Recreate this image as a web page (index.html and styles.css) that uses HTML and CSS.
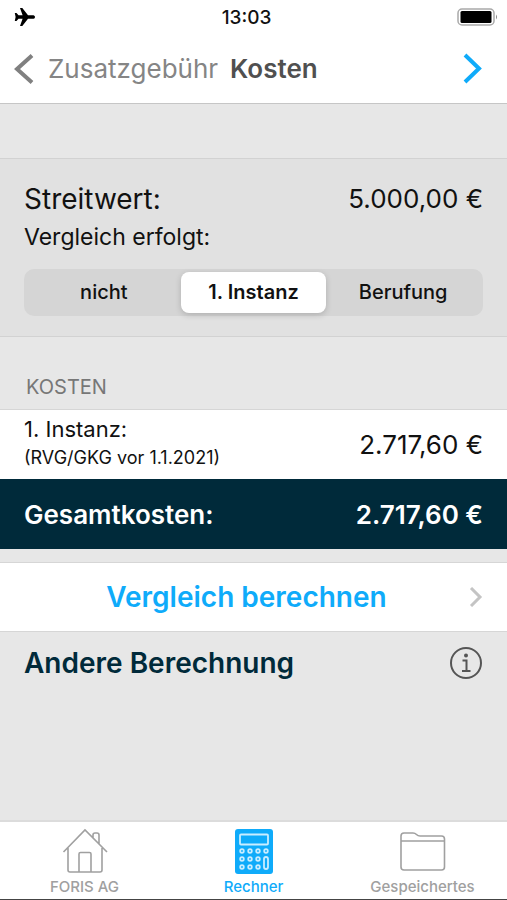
FILE: index.html
```
<!DOCTYPE html>
<html lang="de">
<head>
	<meta charset="utf-8">
	<meta name="viewport" content="width=device-width, initial-scale=1">
	<title>Kosten</title>
	<link rel="stylesheet" href="styles.css">
</head>
<body>

<header class="top">
	<div class="status">
		<svg class="plane" width="22" height="20" viewBox="0 0 22 20"><path d="M21 10c0-1.300-1-1.800-2.500-1.800h-4.500L8.300 1H6l2.600 7.200H4.500L2.500 6H.8l.8 4-.8 4h1.700l2-2.200h4.100L6 19h2.300l5.700-7.200h4.500c1.500 0 2.500-.5 2.500-1.800z"/></svg>
		<span class="time">13:03</span>
		<svg class="battery" width="42" height="18" viewBox="0 0 42 18"><rect x="1" y="1" width="36" height="16" rx="4" fill="#fff" stroke="#a9a9a9" stroke-width="1.500"/><rect x="3.500" y="3" width="31" height="12" rx="1.500"/><path d="M39 6.500q2 2.500 0 5z" fill="#888"/></svg>
	</div>
	<nav class="navbar">
		<a href="#" class="back">
			<svg width="20" height="32" viewBox="0 0 20 32"><path d="M18 2.500 3 16l15 13.500" fill="none" stroke="#808080" stroke-width="4"/></svg>
			<span>Zusatzgebühr</span>
		</a>
		<h1>Kosten</h1>
		<button type="button" class="next" aria-label="Weiter">
			<svg width="20" height="32" viewBox="0 0 20 32"><path d="m2 2 14 13.500L2 29" fill="none" stroke="#0fabfa" stroke-width="4"/></svg>
		</button>
	</nav>
</header>

<main>
	<section class="panel">
		<div class="line">
			<span class="label">Streitwert:</span>
			<span class="amount">5.000,00 €</span>
		</div>
		<fieldset>
			<legend>Vergleich erfolgt:</legend>
			<div class="segments">
				<input type="radio" name="vergleich" id="nicht"><label for="nicht">nicht</label>
				<input type="radio" name="vergleich" id="instanz" checked><label for="instanz">1. Instanz</label>
				<input type="radio" name="vergleich" id="berufung"><label for="berufung">Berufung</label>
			</div>
		</fieldset>
	</section>

	<h2>KOSTEN</h2>
	<div class="row">
		<div class="item">
			<div class="name">1. Instanz:</div>
			<div class="note">(RVG/GKG vor 1.1.2021)</div>
		</div>
		<span class="amount">2.717,60 €</span>
	</div>
	<div class="row total">
		<span>Gesamtkosten:</span>
		<span class="amount">2.717,60 €</span>
	</div>

	<a href="#" class="row calc">
		<span>Vergleich berechnen</span>
		<svg width="14" height="20" viewBox="0 0 14 20"><path d="m2 1 9 9-9 9" fill="none" stroke="#c4c4c4" stroke-width="3"/></svg>
	</a>
	<div class="other">
		<a href="#">Andere Berechnung</a>
		<button type="button" aria-label="Info">
			<svg width="34" height="34" viewBox="0 0 34 34"><circle cx="17" cy="17" r="15" fill="none" stroke="#555" stroke-width="2"/><circle cx="17" cy="9.500" r="2" fill="#555"/><path d="M13.500 14.500h4V25M13 25h8.500" fill="none" stroke="#555" stroke-width="2"/></svg>
		</button>
	</div>
</main>

<nav class="tabs">
	<a href="#">
		<svg width="46" height="46" viewBox="0 0 46 46" fill="none" stroke="#a0a0a0" stroke-width="1.600"><path d="M1.500 24 23 2l22 22M6 20v22q0 2 2 2h30q2 0 2-2V20M17 44V26q0-1.500 1.500-1.500h9q1.500 0 1.500 1.500v18M31 10V7q0-2 2-2h2q2 0 2 2v9"/></svg>
		<span>FORIS AG</span>
	</a>
	<a href="#" class="active">
		<svg width="46" height="46" viewBox="0 0 46 46"><rect x="4" y="1" width="38" height="45" rx="3" fill="#0fabfa"/><g fill="none" stroke="#c9edff" stroke-width="1.800"><rect x="9" y="6.500" width="28" height="10" rx="1"/><circle cx="11" cy="23" r="1.800"/><circle cx="19" cy="23" r="1.800"/><circle cx="27" cy="23" r="1.800"/><circle cx="35" cy="23" r="1.800"/><circle cx="11" cy="31" r="1.800"/><circle cx="19" cy="31" r="1.800"/><circle cx="27" cy="31" r="1.800"/><circle cx="11" cy="39" r="1.800"/><circle cx="19" cy="39" r="1.800"/><circle cx="27" cy="39" r="1.800"/><rect x="33" y="29" width="4" height="12" rx="2"/></g></svg>
		<span>Rechner</span>
	</a>
	<a href="#">
		<svg width="46" height="46" viewBox="0 0 46 46" fill="none" stroke="#a0a0a0" stroke-width="1.600"><path d="M1 13V8q0-3 3-3h9q2 0 3.500 1.500T20 8h21.500q3 0 3 3v28q0 3-3 3H4q-3 0-3-3zh43.500"/></svg>
		<span>Gespeichertes</span>
	</a>
</nav>

</body>
</html>
```
FILE: styles.css
```
* { box-sizing: border-box; }

body {
	margin: 0;
	min-height: 100vh;
	display: flex;
	flex-direction: column;
	background: #e7e7e7;
	color: #111;
	font-family: Inter, "Liberation Sans", sans-serif;
	font-size: 26px;
}

a { color: inherit; text-decoration: none; }
svg { display: block; flex: none; }
button { padding: 0; border: 0; background: none; cursor: pointer; }

.top {
	background: #fff;
	border-bottom: 1px solid #c6c6c6;
}
.status {
	display: flex;
	align-items: center;
	justify-content: space-between;
	height: 34px;
	padding: 0 8px 0 14px;
}
.time { font-size: 19px; font-weight: 500; }

.navbar {
	display: flex;
	align-items: center;
	height: 69px;
	padding: 0 24px 0 14px;
}
.back {
	display: flex;
	align-items: center;
	gap: 14px;
	color: #858585;
	font-size: 26px;
}
h1 {
	margin: 0 auto 0 12px;
	color: #505050;
	font-size: 26px;
	font-weight: 600;
}

main { flex: 1; }

.panel {
	margin-top: 54px;
	padding: 24px 24px 20px;
	background: #e1e1e1;
	border-top: 1px solid #d2d2d2;
	border-bottom: 1px solid #d2d2d2;
}
.line {
	display: flex;
	justify-content: space-between;
	line-height: 32px;
}
.label { font-size: 28px; }
fieldset { margin: 0; padding: 0; border: 0; }
legend {
	padding: 0;
	font-size: 23px;
	line-height: 44px;
}
.segments {
	display: grid;
	grid-template-columns: 19fr 18fr 19fr;
	padding: 3px;
	margin-top: 10px;
	background: #d5d5d5;
	border-radius: 10px;
}
.segments input {
	position: absolute;
	opacity: 0;
}
.segments label {
	border-radius: 8px;
	font-size: 20px;
	font-weight: 500;
	line-height: 41px;
	text-align: center;
	cursor: pointer;
}
.segments input:checked + label {
	background: #fff;
	font-weight: 600;
	box-shadow: 0 2px 6px rgba(0,0,0,0.18);
}

h2 {
	margin: 0;
	padding: 36px 26px 8px;
	color: #777;
	font-size: 20px;
	font-weight: 400;
	line-height: 28px;
}

.row {
	display: flex;
	align-items: center;
	justify-content: space-between;
	min-height: 70px;
	padding: 0 24px;
	background: #fff;
	border-top: 1px solid #d6d6d6;
}
.item { padding-bottom: 6px; }
.name { font-size: 22px; line-height: 32px; }
.note { font-size: 18px; line-height: 26px; }
.total {
	background: #002a3a;
	border-color: #002a3a;
	color: #fff;
	font-weight: 600;
}
.calc {
	margin-top: 13px;
	border-bottom: 1px solid #d6d6d6;
	color: #0fabfa;
	font-size: 28px;
	font-weight: 600;
}
.calc span { flex: 1; text-align: center; }

.other {
	display: flex;
	align-items: center;
	justify-content: space-between;
	height: 62px;
	padding: 0 24px;
	color: #002a3a;
	font-size: 28px;
	font-weight: 600;
}

.tabs {
	display: grid;
	grid-template-columns: repeat(3, 1fr);
	height: 80px;
	padding-top: 6px;
	background: #fff;
	border-top: 2px solid #dcdcdc;
	border-bottom: 1px solid #444;
}
.tabs a {
	display: flex;
	flex-direction: column;
	align-items: center;
	color: #a0a0a0;
	font-size: 15px;
	font-weight: 500;
	line-height: 26px;
}
.tabs .active { color: #0fabfa; }
```
